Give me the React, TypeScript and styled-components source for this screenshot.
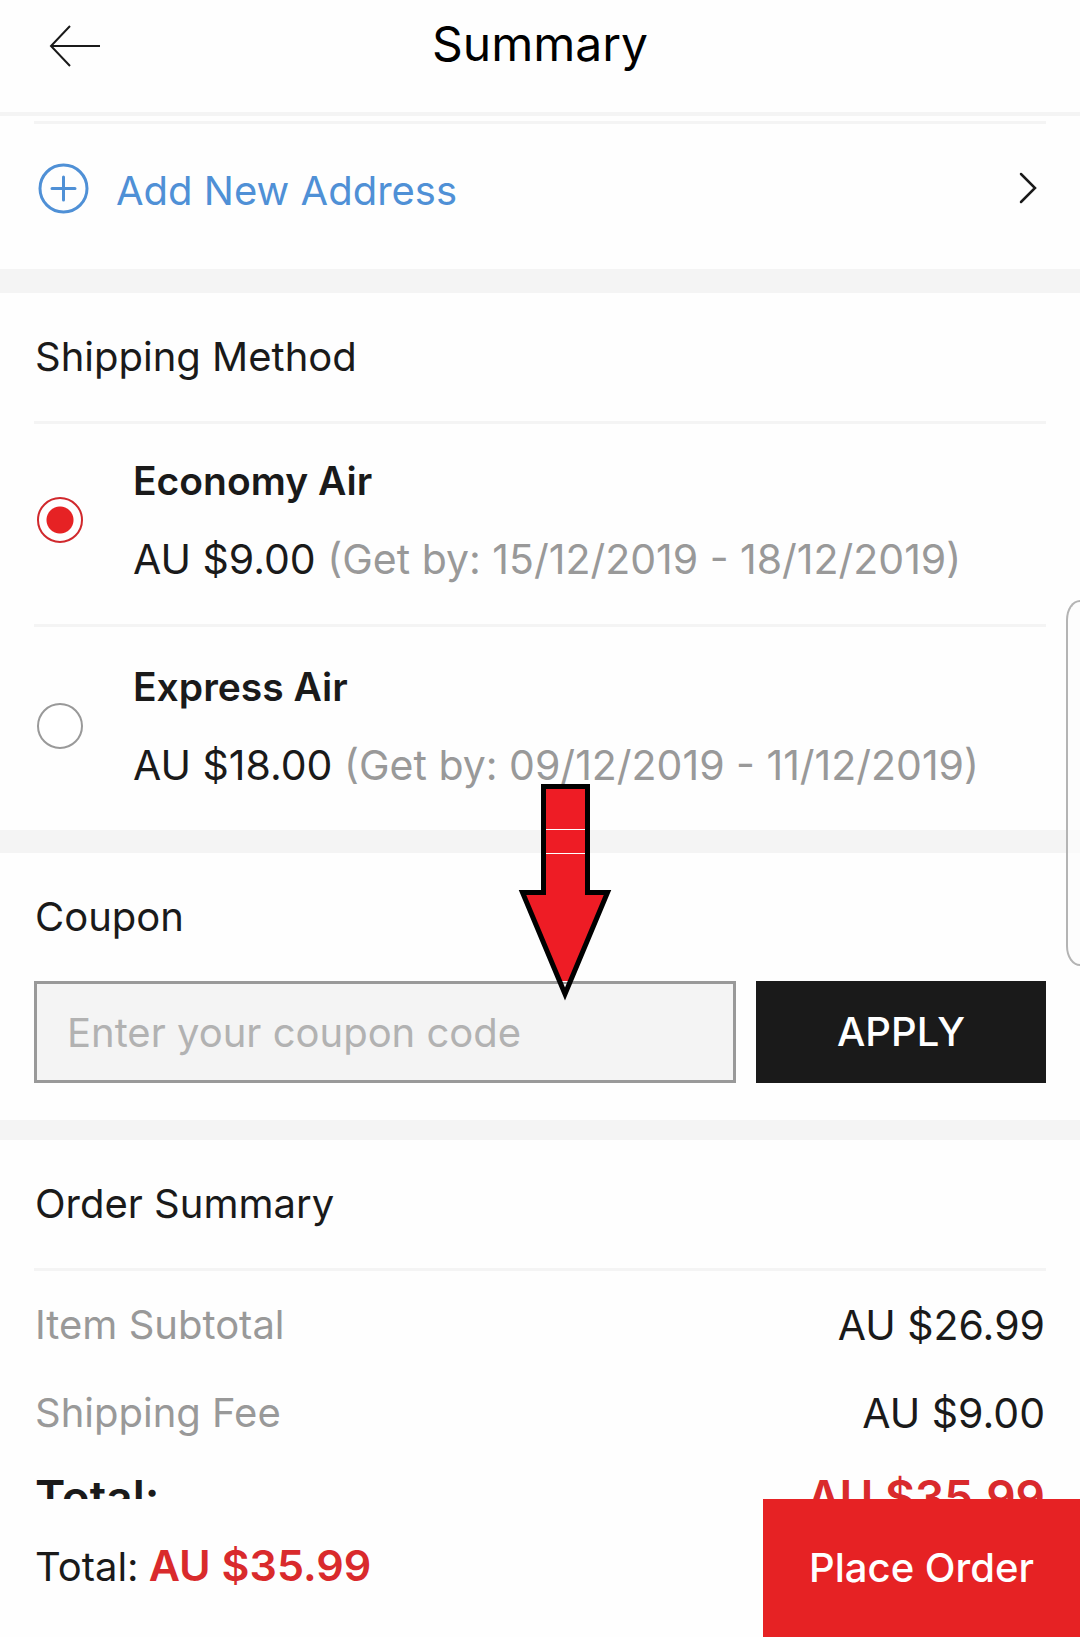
import React, { useState } from "react";
import styled, { createGlobalStyle, css } from "styled-components";

const GlobalStyle = createGlobalStyle`
  *, *::before, *::after { box-sizing: border-box; }
  body {
    margin: 0;
    background: #fefefe;
    color: #1a1a1a;
    font-family: Inter, "Liberation Sans", sans-serif;
    font-size: 40px;
    line-height: 48px;
  }
  button, input { font: inherit; }
`;

const Screen = styled.div`
  position: relative;
  display: flex;
  flex-direction: column;
  height: 100vh;
  overflow: hidden;
`;

const Header = styled.header`
  display: grid;
  grid-template-columns: 100px 1fr 100px;
  align-items: center;
  flex: none;
  padding: 16px 0 36px;
  border-bottom: 4px solid #f4f4f4;
`;

const BackButton = styled.button`
  display: flex;
  justify-content: flex-end;
  padding: 0;
  border: 0;
  background: none;
  color: #1a1a1a;
`;

const Title = styled.h1`
  margin: 0;
  padding-bottom: 4px;
  color: #000;
  font-size: 48px;
  font-weight: 400;
  line-height: 56px;
  text-align: center;
`;

const Content = styled.main`
  flex: 1;
  min-height: 0;
  padding-top: 5px;
  overflow-y: auto;
  scrollbar-width: none;
`;

const Section = styled.section<{ $gap?: number }>`
  position: relative;
  padding: 0 34px;
  border-bottom: ${(p) => p.$gap ?? 0}px solid #f4f4f4;
`;

const AddressButton = styled.button`
  display: flex;
  align-items: center;
  gap: 27px;
  width: 100%;
  padding: 37px 9px 54px 4px;
  border: 0;
  border-top: 3px solid #f4f4f4;
  background: none;
  color: #4f90d6;
  text-align: left;
`;

const AddressLabel = styled.span`
  flex: 1;
  padding-top: 6px;
`;

const SectionTitle = styled.h2<{ $ruled?: boolean }>`
  margin: 0;
  padding: 40px 1px;
  font-size: 40px;
  font-weight: 400;
  line-height: 48px;
  ${(p) =>
    p.$ruled &&
    css`
      border-bottom: 3px solid #f4f4f4;
    `}
`;

const Option = styled.label`
  display: flex;
  align-items: center;
  gap: 50px;
  padding: 33px 3px 41px;

  & + & {
    padding-top: 36px;
    border-top: 3px solid #f4f4f4;
  }
`;

const Radio = styled.input`
  flex: none;
  width: 46px;
  height: 46px;
  margin: 0;
  border: 2px solid #999;
  border-radius: 50%;
  appearance: none;
  background: #fff;

  &:checked {
    border-color: #d0282c;
    background: radial-gradient(circle, #e62224 13px, transparent 14px);
  }
`;

const OptionText = styled.span`
  display: flex;
  flex-direction: column;
  gap: 30px;
`;

const OptionName = styled.span`
  font-size: 39px;
  font-weight: 600;
`;

const OptionPrice = styled.span`
  font-size: 41px;
`;

const Muted = styled.span`
  color: #999;
`;

const CouponForm = styled.form`
  display: flex;
  gap: 20px;
  padding-bottom: 37px;
`;

const CouponInput = styled.input`
  flex: 1;
  min-width: 0;
  height: 102px;
  padding: 0 30px;
  border: 3px solid #999;
  border-radius: 0;
  background: #f4f4f4;
  color: #1a1a1a;

  &::placeholder {
    color: #b2b2b2;
    opacity: 1;
  }
`;

const ApplyButton = styled.button`
  width: 290px;
  padding: 0;
  border: 0;
  background: #1a1a1a;
  color: #fff;
  font-weight: 500;
`;

const Costs = styled.dl`
  display: flex;
  flex-direction: column;
  gap: 40px;
  margin: 0;
  padding: 30px 1px;
`;

const CostRow = styled.div<{ $total?: boolean }>`
  display: flex;
  justify-content: space-between;

  dt { color: #999; }
  dd {
    margin: 0;
    font-size: 41px;
  }

  ${(p) =>
    p.$total &&
    css`
      font-weight: 600;
      line-height: 40px;

      dt, dd { font-size: 46px; }
      dt { color: #1a1a1a; }
      dd { color: #d92a2c; }
    `}
`;

const Footer = styled.footer`
  display: flex;
  justify-content: space-between;
  flex: none;
  min-height: 138px;
  background: #fefefe;
`;

const FooterTotal = styled.p`
  display: flex;
  align-items: baseline;
  gap: 10px;
  margin: 0;
  padding: 42px 35px;

  strong {
    color: #d92a2c;
    font-size: 43px;
    font-weight: 600;
  }
`;

const PlaceOrder = styled.button`
  width: 317px;
  padding: 0;
  border: 0;
  background: #e62224;
  color: #fff;
  font-weight: 500;
`;

const Pointer = styled.svg`
  position: absolute;
  top: -70px;
  left: 48%;
  width: 96px;
  height: 220px;
  pointer-events: none;
`;

const EdgeHandle = styled.div`
  position: absolute;
  top: 600px;
  right: 0;
  width: 14px;
  height: 366px;
  border: 2px solid #b4b4b4;
  border-right: 0;
  border-radius: 14px 0 0 14px / 20px 0 0 20px;
  background: rgba(252, 252, 252, 0.7);
`;

const shippingOptions = [
  { id: "economy", name: "Economy Air", price: "AU $9.00", dates: "(Get by: 15/12/2019 - 18/12/2019)" },
  { id: "express", name: "Express Air", price: "AU $18.00", dates: "(Get by: 09/12/2019 - 11/12/2019)" },
];

const costs = [
  { label: "Item Subtotal", value: "AU $26.99" },
  { label: "Shipping Fee", value: "AU $9.00" },
  { label: "Total:", value: "AU $35.99", total: true },
];

export default function App() {
  const [method, setMethod] = useState("economy");
  const [coupon, setCoupon] = useState("");

  return (
    <>
      <GlobalStyle />
      <Screen>
        <Header>
          <BackButton type="button" aria-label="Back">
            <svg width="51" height="42" viewBox="0 0 51 42" fill="none" stroke="currentColor" strokeWidth="2">
              <path d="M21 1 2 21 21 41M2 21H51" />
            </svg>
          </BackButton>
          <Title>Summary</Title>
        </Header>

        <Content>
          <Section $gap={24}>
            <AddressButton type="button">
              <svg width="51" height="51" viewBox="0 0 51 51" fill="none" stroke="currentColor" strokeWidth="3">
                <circle cx="25.500" cy="25.500" r="23.500" />
                <path d="M25.500 14v23M14 25.500h23" strokeLinecap="round" />
              </svg>
              <AddressLabel>Add New Address</AddressLabel>
              <svg width="18" height="32" viewBox="0 0 18 32" fill="none" stroke="#1a1a1a" strokeWidth="2.500">
                <path d="m2 2 14 14L2 30" strokeLinecap="round" />
              </svg>
            </AddressButton>
          </Section>

          <Section $gap={23}>
            <SectionTitle $ruled>Shipping Method</SectionTitle>
            {shippingOptions.map((o) => (
              <Option key={o.id}>
                <Radio
                  type="radio"
                  name="shipping"
                  value={o.id}
                  checked={method === o.id}
                  onChange={() => setMethod(o.id)}
                />
                <OptionText>
                  <OptionName>{o.name}</OptionName>
                  <OptionPrice>
                    {o.price} <Muted>{o.dates}</Muted>
                  </OptionPrice>
                </OptionText>
              </Option>
            ))}
          </Section>

          <Section $gap={20}>
            <SectionTitle>Coupon</SectionTitle>
            <CouponForm onSubmit={(e) => e.preventDefault()}>
              <CouponInput
                aria-label="Coupon code"
                placeholder="Enter your coupon code"
                value={coupon}
                onChange={(e) => setCoupon(e.target.value)}
              />
              <ApplyButton type="submit">APPLY</ApplyButton>
            </CouponForm>
            <Pointer viewBox="0 0 96 220" aria-hidden="true">
              <path d="M25.500 3.500h44v106h20L52.500 198h-11L4.500 109.500h21z" fill="#ee1c25" />
              <path d="M28 46.500h39M28 70.500h39M42 198.500h10" stroke="#fff" strokeWidth="1" />
              <path
                d="M25.500 3.500h44v106h20L47 211 4.500 109.500h21z"
                fill="none"
                stroke="#000"
                strokeWidth="5"
              />
            </Pointer>
          </Section>

          <Section>
            <SectionTitle $ruled>Order Summary</SectionTitle>
            <Costs>
              {costs.map((c) => (
                <CostRow key={c.label} $total={c.total}>
                  <dt>{c.label}</dt>
                  <dd>{c.value}</dd>
                </CostRow>
              ))}
            </Costs>
          </Section>
        </Content>

        <Footer>
          <FooterTotal>
            Total: <strong>AU $35.99</strong>
          </FooterTotal>
          <PlaceOrder type="button">Place Order</PlaceOrder>
        </Footer>
        <EdgeHandle />
      </Screen>
    </>
  );
}
